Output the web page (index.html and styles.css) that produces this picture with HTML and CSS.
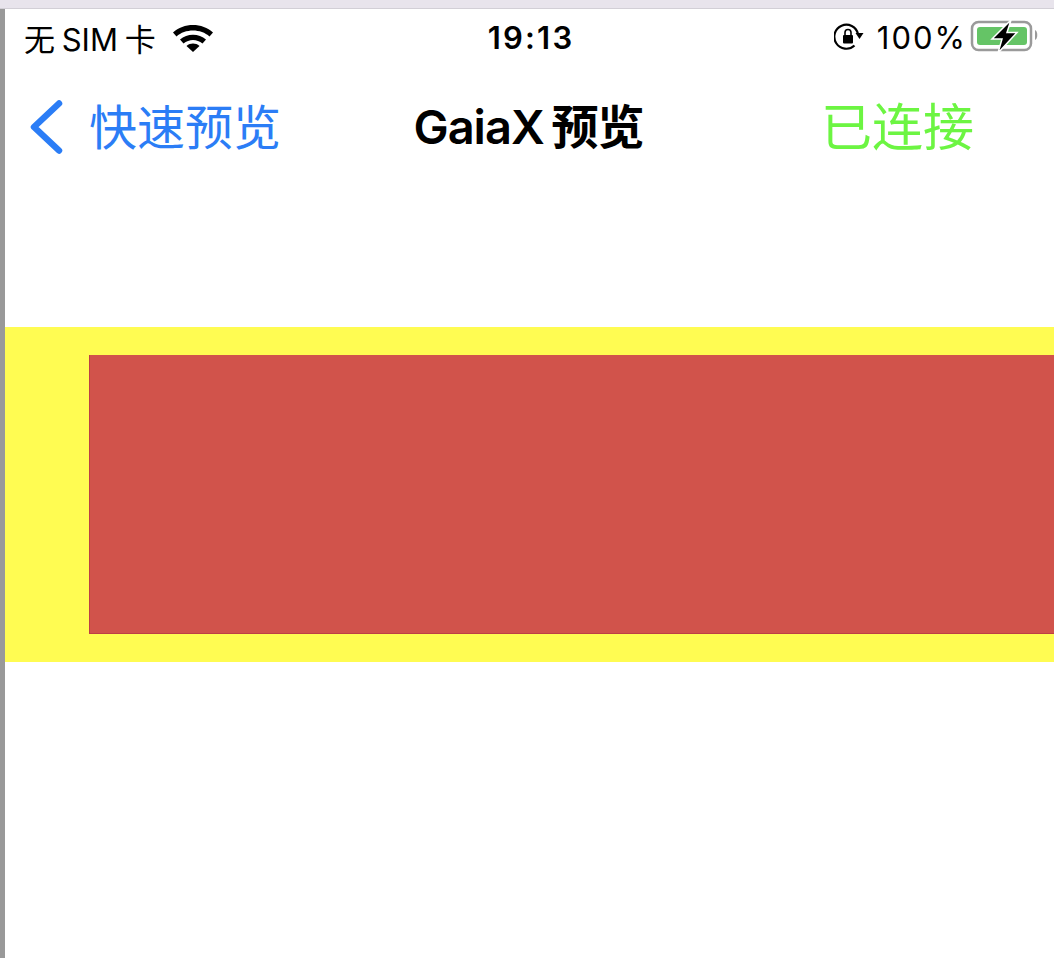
FILE: index.html
```html
<!DOCTYPE html>
<html lang="zh-CN">
<head>
  <meta charset="UTF-8">
  <meta name="viewport" content="width=device-width, initial-scale=1.0">
  <title>GaiaX 预览</title>
  <link rel="stylesheet" href="styles.css">
</head>
<body>
  <div class="window-top"></div>
  <div class="window-body">
    <div class="window-edge"></div>
    <main class="screen">
      <div class="status-bar">
        <div class="status-left">
          <span class="carrier">无 SIM 卡</span>
          <svg class="wifi" width="42" height="30" viewBox="0 0 42 30">
            <path d="M1 10.500C11.500 0.500 30.500 0.500 41 10.500L37.500 14.500C29 6.500 13 6.500 4.500 14.500Z" fill="#000"/>
            <path d="M8 17.500C15 11 27 11 34 17.500L30.500 21.500C25 16.800 17 16.800 11.500 21.500Z" fill="#000"/>
            <path d="M14.500 24C18.500 20.800 23.500 20.800 27.500 24L21 30Z" fill="#000"/>
          </svg>
        </div>
        <div class="clock">19:13</div>
        <div class="status-right">
          <svg class="lock" width="30" height="28" viewBox="0 0 30 28">
            <path d="M24 11A12 12 0 1 0 20.500 22.500" fill="none" stroke="#000" stroke-width="2.200"/>
            <path d="M21.500 10H29.500L25.500 16Z" fill="#000"/>
            <rect x="9" y="12" width="10" height="8.500" rx="1" fill="#000"/>
            <path d="M11 12V9.500A3 3 0 0 1 17 9.500V12" fill="none" stroke="#000" stroke-width="1.600"/>
          </svg>
          <span class="battery-text">100%</span>
          <svg class="battery" width="68" height="34" viewBox="0 0 68 34">
            <rect x="2" y="2" width="59" height="28" rx="6.500" fill="#fff" stroke="#9a9a9a" stroke-width="2.500"/>
            <rect x="7" y="7" width="50" height="18" rx="3" fill="#65c466"/>
            <path d="M65 10C68 11 68 19 65 20Z" fill="#9a9a9a"/>
            <path d="M41 0L22 19H32L28 33L47 12.500H37Z" fill="#000" stroke="#fff" stroke-width="1.500"/>
          </svg>
        </div>
      </div>

      <nav class="nav-bar">
        <a class="nav-back">
          <svg class="chevron" width="34" height="54" viewBox="0 0 34 54">
            <path d="M30 3.500L5 27L30 50.500" fill="none" stroke="#2b7df6" stroke-width="6.500" stroke-linecap="round" stroke-linejoin="round"/>
          </svg>
          <span class="nav-label">快速预览</span>
        </a>
        <h1 class="nav-title">GaiaX 预览</h1>
        <span class="nav-state">已连接</span>
      </nav>

      <section class="preview">
        <div class="preview-box"></div>
      </section>
    </main>
  </div>
</body>
</html>
```

FILE: styles.css
```css
* {
  box-sizing: border-box;
}

html, body {
  height: 100%;
}

body {
  margin: 0;
  display: flex;
  flex-direction: column;
  overflow: hidden;
  background-color: #fff;
  color: #000;
  font-family: 'Inter', 'Noto Sans CJK SC', sans-serif;
}

.window-top {
  height: 9px;
  background-color: #e8e4ec;
  border-bottom: 1px solid #d2cfd6;
}

.window-body {
  flex: 1;
  display: flex;
}

.window-edge {
  width: 5px;
  background-color: #999;
}

.screen {
  flex: 1;
  min-width: 0;
}

.status-bar {
  height: 56px;
  display: grid;
  grid-template-columns: 1fr auto 1fr;
  align-items: center;
  padding: 0 16px 0 19px;
}

.status-left {
  display: flex;
  align-items: center;
  gap: 15px;
}

.carrier {
  font-size: 31px;
  word-spacing: -2px;
}

.wifi {
  margin-left: 1px;
}

.clock {
  font-size: 31px;
  font-weight: 600;
  letter-spacing: 2.2px;
}

.status-right {
  display: flex;
  align-items: center;
  justify-content: flex-end;
  gap: 3px;
}

.lock {
  margin-right: 10px;
}

.battery-text {
  font-size: 31px;
  letter-spacing: 2px;
}

.nav-bar {
  height: 124px;
  display: grid;
  grid-template-columns: 1fr auto 1fr;
  align-items: center;
  padding: 0 26px 0 24px;
}

.nav-back {
  display: flex;
  align-items: center;
  gap: 26px;
  color: #2b7df6;
}

.nav-label {
  margin-bottom: 7px;
  font-size: 48px;
}

.nav-title {
  margin: 0 0 7px;
  font-size: 47px;
  font-weight: 600;
  letter-spacing: -1px;
  word-spacing: -3px;
}

.nav-state {
  justify-self: end;
  margin: 0 54px 7px 0;
  color: #6cf542;
  font-size: 51px;
}

.preview {
  margin-top: 138px;
  height: 335px;
  padding: 28px 0 28px 84px;
  background-color: #fffc52;
}

.preview-box {
  height: 100%;
  background-color: #d1534b;
  border-left: 1px solid #bd3f45;
  border-bottom: 1px solid #bd3f45;
}
```
